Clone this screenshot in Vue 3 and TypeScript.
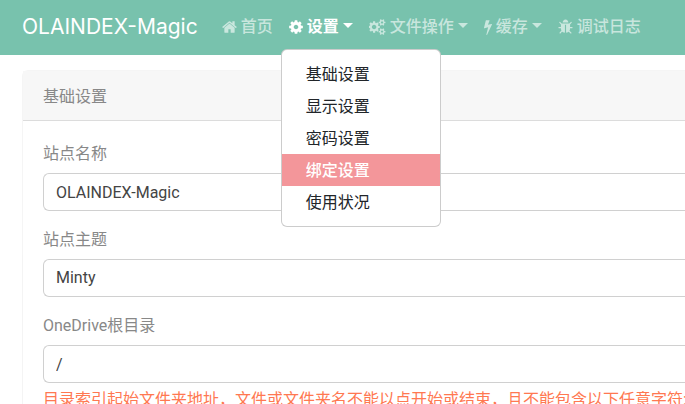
<script setup lang="ts">
import { ref } from 'vue'

interface NavItem {
  label: string
  icon: string
  viewBox: string
  width: number
  active?: boolean
  dropdown?: boolean
  menu?: string[]
}

const navItems: NavItem[] = [
  {
    label: '首页',
    viewBox: '64 0 1664 1792',
    width: 15,
    icon: 'M1472 992v480q0 26-19 45t-45 19h-384v-384h-256v384h-384q-26 0-45-19t-19-45v-480q0-1 .5-3t.5-3l575-474 575 474q1 2 1 6zm223-69l-62 74q-8 9-21 11h-3q-13 0-21-7l-692-577-692 577q-12 8-24 7-13-2-21-11l-62-74q-8-10-7-23.5t11-21.5l719-599q32-26 76-26t76 26l244 204v-195q0-14 9-23t23-9h192q14 0 23 9t9 23v408l219 182q10 8 11 21.5t-7 23.5z',
  },
  {
    label: '设置',
    viewBox: '128 0 1536 1792',
    width: 14,
    active: true,
    dropdown: true,
    menu: ['基础设置', '显示设置', '密码设置', '绑定设置', '使用状况'],
    icon: 'M1152 896q0-106-75-181t-181-75-181 75-75 181 75 181 181 75 181-75 75-181zm512-109v222q0 12-8 23t-20 13l-185 28q-19 54-39 91 35 50 107 138 10 12 10 25t-9 23q-27 37-99 108t-94 71q-12 0-26-9l-138-108q-44 23-91 38-16 136-29 186-7 28-36 28h-222q-14 0-24.5-8.5t-11.5-21.5l-28-184q-49-16-90-37l-141 107q-10 9-25 9-14 0-25-11-126-114-165-168-7-10-7-23 0-12 8-23 15-21 51-66.5t54-70.5q-27-50-41-99l-183-27q-13-2-21-12.5t-8-23.5v-222q0-12 8-23t19-13l186-28q14-46 39-92-40-57-107-138-10-12-10-24 0-10 9-23 26-36 98.5-107.5t94.5-71.5q13 0 26 10l138 107q44-23 91-38 16-136 29-186 7-28 36-28h222q14 0 24.5 8.5t11.5 21.5l28 184q49 16 90 37l142-107q9-9 24-9 13 0 25 10 129 119 165 170 7 8 7 22 0 12-8 23-15 21-51 66.5t-54 70.5q26 50 41 98l183 28q13 2 21 12.5t8 23.5z',
  },
  {
    label: '文件操作',
    viewBox: '0 0 1920 1792',
    width: 17,
    dropdown: true,
    icon: 'M832 896q0-106-75-181t-181-75-181 75-75 181 75 181 181 75 181-75 75-181zm768 512q0-52-38-90t-90-38-90 38-38 90q0 53 37.5 90.5t90.5 37.5 90.5-37.5 37.5-90.5zm0-1024q0-52-38-90t-90-38-90 38-38 90q0 53 37.5 90.5t90.5 37.5 90.5-37.5 37.5-90.5zm-384 421v185q0 10-7 19.5t-16 10.5l-155 24q-11 35-32 76 34 48 90 115 7 11 7 20 0 12-7 19-23 30-82.5 89.5t-78.5 59.5q-11 0-21-7l-115-90q-37 19-77 31-11 108-23 155-7 24-30 24h-186q-11 0-20-7.5t-10-17.5l-23-153q-34-10-75-31l-118 89q-7 7-20 7-11 0-21-8-144-133-144-160 0-9 7-19 10-14 41-53t47-61q-23-44-35-82l-152-24q-10-1-17-9.5t-7-19.5v-185q0-10 7-19.5t16-10.5l155-24q11-35 32-76-34-48-90-115-7-11-7-20 0-12 7-20 22-30 82-89t79-59q11 0 21 7l115 90q34-18 77-32 11-108 23-154 7-24 30-24h186q11 0 20 7.5t10 17.5l23 153q34 10 75 31l118-89q8-7 20-7 11 0 21 8 144 133 144 160 0 8-7 19-12 16-42 54t-45 60q23 48 34 82l152 23q10 2 17 10.5t7 19.5zm640 533v140q0 16-149 31-12 27-30 52 51 113 51 138 0 4-4 7-122 71-124 71-8 0-46-47t-52-68q-20 2-30 2t-30-2q-14 21-52 68t-46 47q-2 0-124-71-4-3-4-7 0-25 51-138-18-25-30-52-149-15-149-31v-140q0-16 149-31 13-29 30-52-51-113-51-138 0-4 4-7 4-2 35-20t59-34 30-16q8 0 46 46.5t52 67.5q20-2 30-2t30 2q51-71 92-112l6-2q4 0 124 70 4 3 4 7 0 25-51 138 17 23 30 52 149 15 149 31zm0-1024v140q0 16-149 31-12 27-30 52 51 113 51 138 0 4-4 7-122 71-124 71-8 0-46-47t-52-68q-20 2-30 2t-30-2q-14 21-52 68t-46 47q-2 0-124-71-4-3-4-7 0-25 51-138-18-25-30-52-149-15-149-31v-140q0-16 149-31 13-29 30-52-51-113-51-138 0-4 4-7 4-2 35-20t59-34 30-16q8 0 46 46.5t52 67.5q20-2 30-2t30 2q51-71 92-112l6-2q4 0 124 70 4 3 4 7 0 25-51 138 17 23 30 52 149 15 149 31z',
  },
  {
    label: '缓存',
    viewBox: '448 0 896 1792',
    width: 8,
    dropdown: true,
    icon: 'M1333 566q18 20 7 44l-540 1157q-13 25-42 25-4 0-14-2-17-5-25.5-19t-4.5-30l197-808-406 101q-4 1-12 1-18 0-31-11-18-15-13-39l201-825q4-14 16-23t28-9h328q19 0 32 12.5t13 29.5q0 8-5 18l-171 463 396-98q8-2 12-2 19 0 34 15z',
  },
  {
    label: '调试日志',
    viewBox: '64 0 1664 1792',
    width: 15,
    icon: 'M1696 960q0 26-19 45t-45 19h-224q0 171-67 290l208 209q19 19 19 45t-19 45q-18 19-45 19t-45-19l-198-197q-5 5-15 13t-42 28.5-65 36.5-82 29-97 13v-896h-128v896q-51 0-101.5-13.5t-87-33-66-39-43.5-32.5l-15-14-183 207q-20 21-48 21-24 0-43-16-19-18-20.5-44.5t15.5-46.5l202-227q-58-114-58-274h-224q-26 0-45-19t-19-45 19-45 45-19h224v-294l-173-173q-19-19-19-45t19-45 45-19 45 19l173 173h844l173-173q19-19 45-19t45 19 19 45-19 45l-173 173v294h224q26 0 45 19t19 45zm-480-576h-640q0-133 93.5-226.5t226.5-93.5 226.5 93.5 93.5 226.5z',
  },
]

const highlighted = ref('绑定设置')
const siteName = ref('OLAINDEX-Magic')
const theme = ref('Minty')
const root = ref('/')
</script>

<template>
  <div class="page">
    <header class="navbar">
      <a class="brand" href="#">OLAINDEX-Magic</a>
      <nav>
        <ul class="nav">
          <li v-for="item in navItems" :key="item.label" class="nav-item">
            <a href="#" class="nav-link" :class="{ active: item.active }">
              <svg :viewBox="item.viewBox" :width="item.width" height="16" aria-hidden="true">
                <path :d="item.icon" fill="currentColor" />
              </svg>
              <span>{{ item.label }}</span>
              <i v-if="item.dropdown" class="caret"></i>
            </a>
            <div v-if="item.menu" class="menu">
              <a
                v-for="entry in item.menu"
                :key="entry"
                href="#"
                class="menu-item"
                :class="{ highlighted: entry === highlighted }"
                @mouseenter="highlighted = entry"
              >{{ entry }}</a>
            </div>
          </li>
        </ul>
      </nav>
    </header>

    <main class="content">
      <section class="card">
        <h1 class="card-header">基础设置</h1>
        <form class="card-body" @submit.prevent>
          <div class="field">
            <label for="site-name">站点名称</label>
            <input id="site-name" v-model="siteName" class="control" type="text" />
          </div>
          <div class="field">
            <label for="site-theme">站点主题</label>
            <select id="site-theme" v-model="theme" class="control">
              <option value="Minty">Minty</option>
            </select>
          </div>
          <div class="field">
            <label for="root-folder">OneDrive根目录</label>
            <input id="root-folder" v-model="root" class="control" type="text" />
            <span class="hint">目录索引起始文件夹地址，文件或文件夹名不能以点开始或结束，且不能包含以下任意字符:</span>
          </div>
        </form>
      </section>
    </main>
  </div>
</template>

<style>
body {
  margin: 0;
  background: #fff;
}
</style>

<style scoped>
.page {
  height: 100vh;
  overflow: hidden;
  font: 16px/24px Roboto, "Noto Sans CJK SC", sans-serif;
  color: #888;
}

a {
  color: inherit;
  text-decoration: none;
}

.navbar {
  display: flex;
  align-items: center;
  gap: 16px;
  padding: 7px 22px 8px;
  background: #78c2ad;
}

.brand {
  color: #fff;
  font-family: Inter, sans-serif;
  font-size: 21px;
  line-height: 32px;
  white-space: nowrap;
}

.nav {
  display: flex;
  margin: 0;
  padding: 0;
  list-style: none;
}

.nav-item {
  position: relative;
}

.nav-link {
  display: flex;
  align-items: center;
  gap: 4px;
  padding: 8px;
  color: rgba(255, 255, 255, 0.6);
  font-weight: 500;
  white-space: nowrap;
}

.nav-link.active {
  color: #fff;
  font-weight: 700;
}

.caret {
  margin-bottom: 4px;
  border: 5px solid transparent;
  border-top-color: currentColor;
  border-bottom: 0;
}

.menu {
  position: absolute;
  z-index: 10;
  top: 100%;
  left: 0;
  margin-top: 2px;
  min-width: 158px;
  padding: 8px 0;
  background: #fff;
  border: 1px solid rgba(0, 0, 0, 0.2);
  border-radius: 6px;
}

.menu-item {
  display: block;
  padding: 5px 24px 3px;
  color: #212529;
}

.menu-item.highlighted {
  background: #f3969a;
  color: #fff;
  font-weight: 500;
}

.content {
  padding: 15px 0 0 22px;
}

.card {
  border: 1px solid rgba(0, 0, 0, 0.04);
  border-right: 0;
  border-radius: 6px 0 0 0;
}

.card-header {
  margin: 0;
  padding: 14px 20px 11px;
  background: #f7f7f7;
  border-bottom: 1px solid #dcdcdc;
  font-size: 16px;
  font-weight: 400;
  line-height: 24px;
}

.card-body {
  padding: 21px 0 20px 20px;
}

.field {
  display: flex;
  flex-direction: column;
  margin-bottom: 17px;
}

.field label {
  margin-bottom: 7px;
}

.control {
  appearance: none;
  box-sizing: border-box;
  width: 100%;
  height: 38px;
  padding: 6px 12px;
  border: 1px solid #d0d0d0;
  border-right: 0;
  border-radius: 6px 0 0 6px;
  background: #fff;
  color: #444;
  font: inherit;
}

.hint {
  margin-top: 5px;
  color: #ff7851;
  white-space: nowrap;
}
</style>
